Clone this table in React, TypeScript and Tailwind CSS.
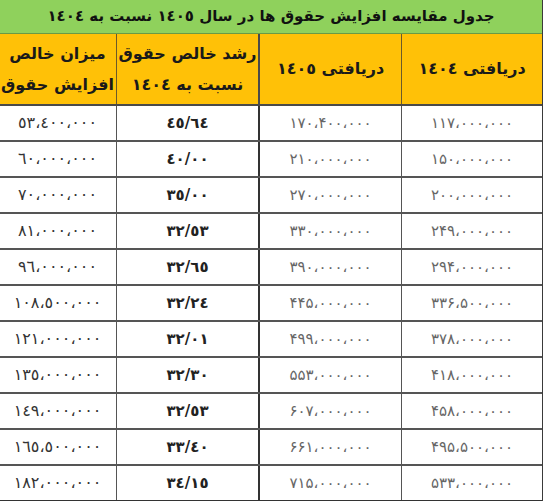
import React from "react";

type Row = [string, string, string, string];

// columns from right to left: 1404, 1405, growth, net increase
const rows: Row[] = [
  ["۱۱۷،۰۰۰،۰۰۰", "۱۷۰،۴۰۰،۰۰۰", "٤٥/٦٤", "٥٣،٤٠٠،٠٠٠"],
  ["۱۵۰،۰۰۰،۰۰۰", "۲۱۰،۰۰۰،۰۰۰", "٤٠/٠٠", "٦٠،٠٠٠،٠٠٠"],
  ["۲۰۰،۰۰۰،۰۰۰", "۲۷۰،۰۰۰،۰۰۰", "٣٥/٠٠", "٧٠،٠٠٠،٠٠٠"],
  ["۲۴۹،۰۰۰،۰۰۰", "۳۳۰،۰۰۰،۰۰۰", "٣٢/٥٣", "٨١،٠٠٠،٠٠٠"],
  ["۲۹۴،۰۰۰،۰۰۰", "۳۹۰،۰۰۰،۰۰۰", "٣٢/٦٥", "٩٦،٠٠٠،٠٠٠"],
  ["۳۳۶،۵۰۰،۰۰۰", "۴۴۵،۰۰۰،۰۰۰", "٣٢/٢٤", "١٠٨،٥٠٠،٠٠٠"],
  ["۳۷۸،۰۰۰،۰۰۰", "۴۹۹،۰۰۰،۰۰۰", "٣٢/٠١", "١٢١،٠٠٠،٠٠٠"],
  ["۴۱۸،۰۰۰،۰۰۰", "۵۵۳،۰۰۰،۰۰۰", "٣٢/٣٠", "١٣٥،٠٠٠،٠٠٠"],
  ["۴۵۸،۰۰۰،۰۰۰", "۶۰۷،۰۰۰،۰۰۰", "٣٢/٥٣", "١٤٩،٠٠٠،٠٠٠"],
  ["۴۹۵،۵۰۰،۰۰۰", "۶۶۱،۰۰۰،۰۰۰", "٣٣/٤٠", "١٦٥،٥٠٠،٠٠٠"],
  ["۵۳۳،۰۰۰،۰۰۰", "۷۱۵،۰۰۰،۰۰۰", "٣٤/١٥", "١٨٢،٠٠٠،٠٠٠"],
];

const cols = "grid grid-cols-[141px_143px_142px_117px]";

function Num({ v }: { v: string }) {
  return <span dir="ltr" className="[unicode-bidi:isolate]">{v}</span>;
}

export default function App() {
  return (
    <div className="w-[545px] h-[501px] bg-white overflow-hidden [font-family:'DejaVu_Sans',sans-serif]">
      <div dir="rtl" className="w-[543px] border-r border-[#3a3a3a]">
        <div className="h-[34px] bg-[#8fd15c] border-b border-[#6a9a44] text-center leading-[33px] text-[15px] font-bold text-[#111]">
          جدول مقایسه افزایش حقوق ها در سال ١٤٠٥ نسبت به ١٤٠٤
        </div>
        <div className={`${cols} h-[72px] bg-[#ffc107] border-b-2 border-[#4a4a4a] text-[#1a1a1a] font-bold`}>
          <div className="flex items-center justify-center text-[16px] border-l border-[#6b5a2a]">
            دریافتی ١٤٠٤
          </div>
          <div className="flex items-center justify-center text-[16px] border-l-2 border-[#4a4a4a]">
            دریافتی ١٤٠٥
          </div>
          <div className="flex flex-col items-center justify-center text-[16px] leading-[31px] border-l border-[#6b5a2a]">
            <span>رشد خالص حقوق</span>
            <span>نسبت به ١٤٠٤</span>
          </div>
          <div className="flex flex-col items-center justify-center text-[16px] leading-[31px]">
            <span>میزان خالص</span>
            <span>افزایش حقوق</span>
          </div>
        </div>
        {rows.map((r, i) => (
          <div key={i} className={`${cols} h-[36px] border-b-2 ${i < rows.length - 1 ? "border-[#555]" : "border-[#333]"}`}>
            <div className="flex items-center justify-center text-[15px] text-[#666] border-l border-[#555]">
              <Num v={r[0]} />
            </div>
            <div className="flex items-center justify-center text-[15px] text-[#666] border-l-2 border-[#333]">
              <Num v={r[1]} />
            </div>
            <div className="flex items-center justify-center text-[15px] font-bold text-[#222] border-l border-[#555]">
              <Num v={r[2]} />
            </div>
            <div className="flex items-center justify-center text-[16px] text-[#333]">
              <Num v={r[3]} />
            </div>
          </div>
        ))}
      </div>
    </div>
  );
}
